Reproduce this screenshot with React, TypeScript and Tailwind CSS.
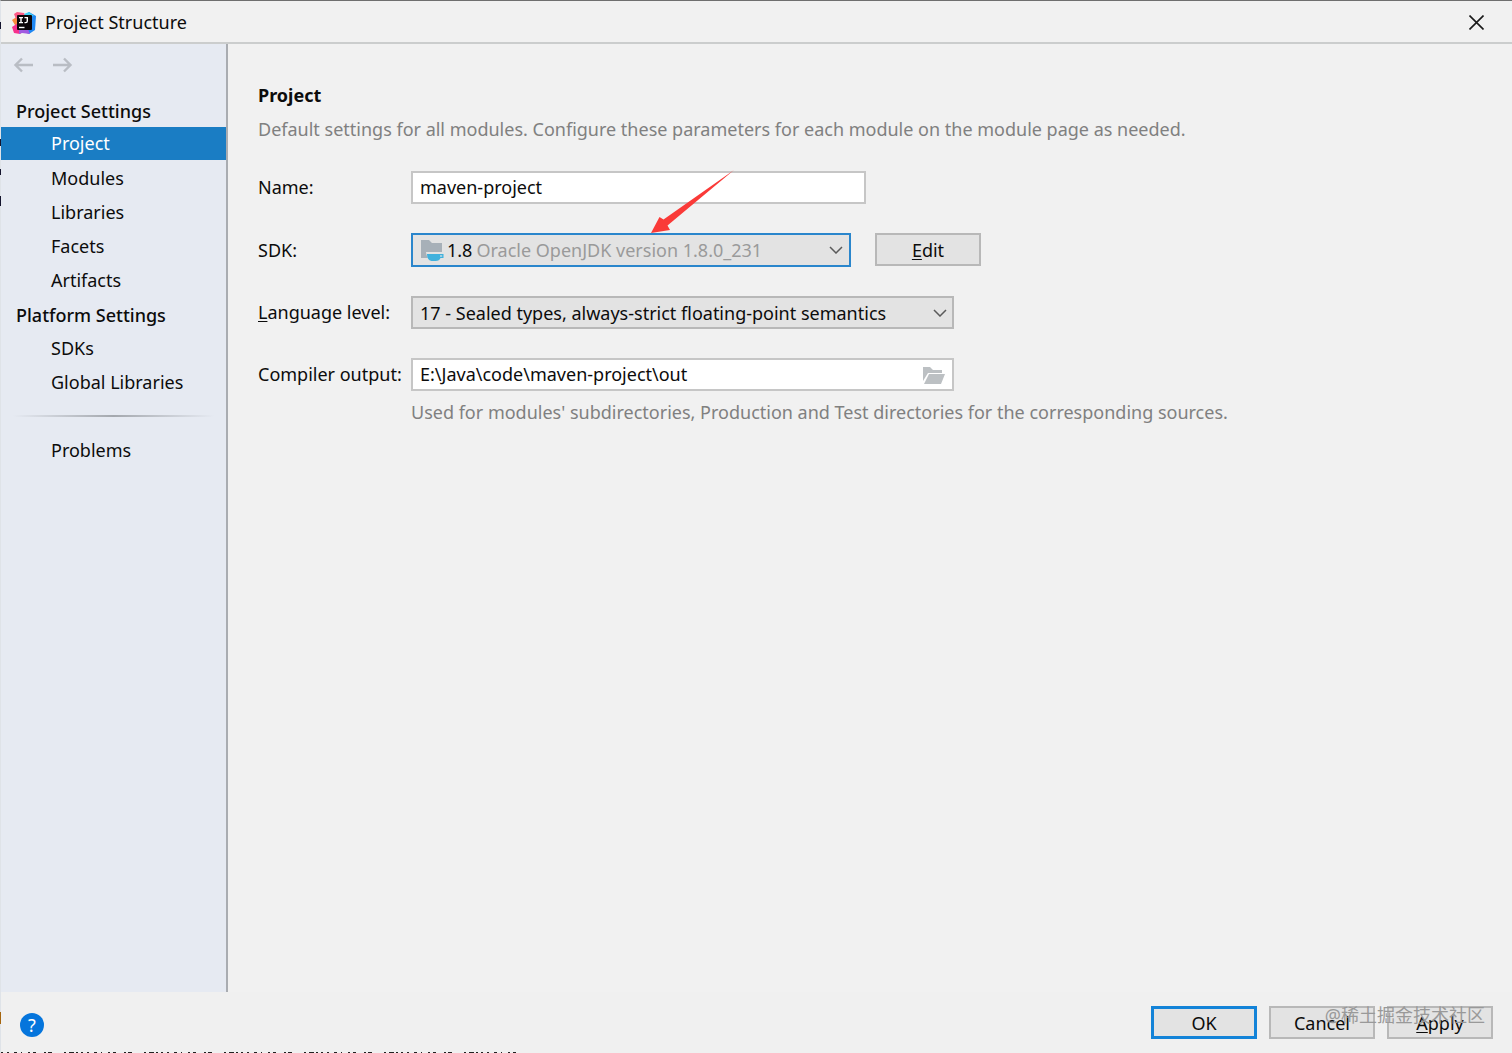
import type { ReactNode } from "react";

function Logo() {
  return (
    <svg width="24" height="24" viewBox="0 0 24 24" aria-hidden="true">
      <path d="M0 9 L6 5 L12 5 L8 16 L3 14 Z" fill="#fb8a3c" />
      <path d="M2 3 L5 1 L12 2 L14 6 L4 8 Z" fill="#fc5a86" />
      <path d="M13 4 L17 1 L24 5 L23 19 L17 23 L10 20 Z" fill="#1f87f2" />
      <path d="M12 3 L17 1 L22 5 L14 6 Z" fill="#3fd0f5" />
      <path d="M0 16 L6 12 L12 20 L8 23 L2 22 Z" fill="#f7318c" />
      <path d="M7 19 L16 18 L18 23 L10 22 L7 23 Z" fill="#a05ae0" />
      <rect x="5" y="4" width="15" height="15" rx="1" fill="#0b0508" />
      <path d="M7 6.600h4M9 6.600v5M7 11.600h4M12.500 6.600h3.500M15.300 6.600v3.400q0 1.600-1.500 1.600h-1.300" stroke="#fff" strokeWidth="1.400" fill="none" />
      <path d="M7 16.500h5.500" stroke="#fff" strokeWidth="1.400" />
    </svg>
  );
}

function Arrow({ back }: { back?: boolean }) {
  return (
    <svg width="20" height="16" viewBox="0 0 20 16" fill="none" stroke="#b9bdc4" strokeWidth="2.4" aria-hidden="true">
      {back ? <path d="M20 8H2.500M9 1.500L2.500 8l6.500 6.500" /> : <path d="M0 8h17.500M11 1.500L17.500 8l-6.500 6.500" />}
    </svg>
  );
}

function Chevron() {
  return (
    <svg width="14" height="8" viewBox="0 0 14 8" fill="none" stroke="#5a5a5a" strokeWidth="1.500" aria-hidden="true">
      <path d="M1 1l6 6 6-6" />
    </svg>
  );
}

function NavItem({ children, selected }: { children: ReactNode; selected?: boolean }) {
  return (
    <li>
      <a
        href="#"
        aria-current={selected ? "page" : undefined}
        className={
          selected
            ? "mb-px flex h-[33px] items-center bg-[#1a7dc4] pl-[50px] text-white"
            : "flex h-[34px] items-center pl-[50px]"
        }
      >
        {children}
      </a>
    </li>
  );
}

function NavHeading({ children }: { children: ReactNode }) {
  return <h2 className="flex h-[34px] items-center pl-[15px] pt-[2px] font-medium">{children}</h2>;
}

function Sidebar() {
  return (
    <nav className="flex w-[227px] shrink-0 flex-col border-r-2 border-[#a9acb1] bg-[#e6eaf2]">
      <div className="flex h-[49px] gap-5 pl-3 pt-[13px]">
        <button type="button" aria-label="Back" className="h-4">
          <Arrow back />
        </button>
        <button type="button" aria-label="Forward" className="h-4">
          <Arrow />
        </button>
      </div>
      <NavHeading>Project Settings</NavHeading>
      <ul>
        <NavItem selected>Project</NavItem>
        <NavItem>Modules</NavItem>
        <NavItem>Libraries</NavItem>
        <NavItem>Facets</NavItem>
        <NavItem>Artifacts</NavItem>
      </ul>
      <NavHeading>Platform Settings</NavHeading>
      <ul>
        <NavItem>SDKs</NavItem>
        <NavItem>Global Libraries</NavItem>
      </ul>
      <div className="flex h-[34px] items-center px-3">
        <div className="h-[2px] w-full bg-linear-to-r from-transparent via-[#a4a8ae] to-transparent" />
      </div>
      <ul>
        <NavItem>Problems</NavItem>
      </ul>
    </nav>
  );
}

function SdkSelect() {
  return (
    <div className="relative flex h-[34px] w-[440px] items-center border-2 border-[#2a86cc] bg-[#e3e3e3] pl-2 pr-[6px]">
      <svg width="24" height="22" viewBox="0 0 24 22" className="mr-[2px] shrink-0" aria-hidden="true">
        <path d="M0 1h8l3 3h10v15H0z" fill="#a7b0b8" />
        <path d="M5 13h18v5h-3q-1 4-5 4h-4q-5-1-6-9z" fill="#e3e3e3" />
        <path d="M6 15h16.500v4H19.500q-1 3-5 3h-4q-4.500-1-4.500-7z" fill="#40b1dd" />
        <path d="M19 16.400h2.200v1.200h-2.200z" fill="#e3e3e3" />
      </svg>
      <span className="mr-1">1.8</span>
      <span className="grow text-[#9a9a9a]">Oracle OpenJDK version 1.8.0_231</span>
      <Chevron />
      <select id="sdk" className="absolute inset-0 h-full w-full appearance-none opacity-0">
        <option>1.8</option>
      </select>
      <svg width="86" height="64" viewBox="0 0 86 64" className="pointer-events-none absolute -top-[65px] left-[238px]" aria-hidden="true">
        <path d="M83 0 L16.500 55.500 L19 60 L0 63 L8.500 47 L12.500 49.500 Z" fill="#fa3a38" />
      </svg>
    </div>
  );
}

const buttonClass = "h-[33px] w-[106px] border-2 border-[#b8b8b8] bg-[#e3e3e3] leading-[26px]";

function Settings() {
  return (
    <main className="grow px-[30px] pt-9">
      <h1 className="h-[30px] font-bold leading-[30px]">Project</h1>
      <p className="mt-1 h-[30px] leading-[30px] text-[#808080]">
        Default settings for all modules. Configure these parameters for each module on the module page as needed.
      </p>
      <form className="mt-[27px] grid grid-cols-[153px_1fr] items-center gap-y-[29px]">
        <label htmlFor="name">Name:</label>
        <input id="name" defaultValue="maven-project" className="h-[33px] w-[455px] border-2 border-[#c6c6c6] bg-white px-[7px] pb-[2px]" />

        <label htmlFor="sdk">SDK:</label>
        <div className="flex gap-6">
          <SdkSelect />
          <button type="button" className={buttonClass}>
            <u className="underline-offset-2">E</u>dit
          </button>
        </div>

        <label htmlFor="level">
          <u className="underline-offset-2">L</u>anguage level:
        </label>
        <div className="relative w-[543px]">
          <select id="level" className="block h-[33px] w-full appearance-none border-2 border-[#b8b8b8] bg-[#e3e3e3] px-[7px] pt-[2px]">
            <option>17 - Sealed types, always-strict floating-point semantics</option>
          </select>
          <span className="pointer-events-none absolute right-[7px] top-[13px]">
            <Chevron />
          </span>
        </div>

        <label htmlFor="output" className="whitespace-nowrap">Compiler output:</label>
        <div className="flex h-[33px] w-[543px] items-center border-2 border-[#c6c6c6] bg-white pl-[7px] pr-[7px]">
          <input id="output" defaultValue="E:\Java\code\maven-project\out" className="min-w-0 grow bg-transparent" />
          <button type="button" aria-label="Browse" className="pt-[2px]">
            <svg width="22" height="17" viewBox="0 0 22 17" fill="#bcc0c3" aria-hidden="true">
              <path d="M0 0h7l3 3h9v3H5L0 14z" />
              <path d="M6 7h16l-4 10H1z" />
            </svg>
          </button>
        </div>
      </form>
      <p className="ml-[153px] mt-[6px] h-[30px] leading-[30px] text-[#808080]">
        Used for modules' subdirectories, Production and Test directories for the corresponding sources.
      </p>
    </main>
  );
}

function WindowEdges() {
  return (
    <>
      <svg width="1" height="1052" className="pointer-events-none absolute -left-px top-0" aria-hidden="true">
        <path d="M.5 21v7M.5 138v7M.5 168v6M.5 195v10" stroke="#15152e" />
        <path d="M.5 1011v12" stroke="#a5650e" />
      </svg>
      <svg width="522" height="2" className="pointer-events-none absolute bottom-0 left-0" aria-hidden="true">
        <path d="M0 1.500h522" stroke="#222" strokeDasharray="2 4 2 5 3 4 1 6 2 3 3 8 2 2 4 12 2 3 5 2 2 3" />
      </svg>
    </>
  );
}

export default function App() {
  return (
    <div className="relative flex min-h-screen flex-col border-l border-t border-l-[#dfe3e8] border-t-[#6f6f6f] bg-[#f1f1f1] font-['Noto_Sans','Noto_Sans_CJK_SC',sans-serif] text-[18px] text-[#0c0c0c]">
      <header className="flex h-[43px] items-center border-b-2 border-[#cbcdcd] pl-[11px] pr-7 pt-[2px]">
        <Logo />
        <span className="ml-[9px] grow">Project Structure</span>
        <button type="button" aria-label="Close">
          <svg width="15" height="15" viewBox="0 0 15 15" stroke="#1a1a1a" strokeWidth="1.600" aria-hidden="true">
            <path d="M.5.5l14 14M14.500.5l-14 14" />
          </svg>
        </button>
      </header>
      <div className="flex grow">
        <Sidebar />
        <Settings />
      </div>
      <footer className="relative flex h-[61px] items-center bg-[#f0f0f0] pl-[19px] pr-[19px]">
        <button type="button" aria-label="Help" className="mt-1 size-6 rounded-full bg-[#0575dc] leading-6 text-white">
          ?
        </button>
        <div className="ml-auto flex gap-3">
          <button type="button" className="h-[33px] w-[106px] border-3 border-[#1383d8] bg-[#e3e3e3] leading-[24px]">OK</button>
          <button type="button" className={buttonClass}>Cancel</button>
          <button type="button" className={buttonClass}>
            <u className="underline-offset-2">A</u>pply
          </button>
        </div>
        <span className="pointer-events-none absolute right-[27px] top-[10px] text-[#999999]">@稀土掘金技术社区</span>
      </footer>
      <WindowEdges />
    </div>
  );
}
